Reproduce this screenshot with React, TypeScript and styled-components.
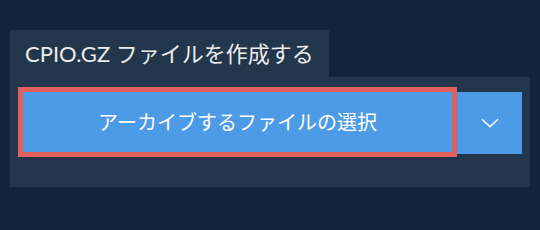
import { createGlobalStyle, styled } from 'styled-components';

const GlobalStyle = createGlobalStyle`
  html, body {
    margin: 0;
    padding: 0;
    background-color: #11243a;
  }

  body {
    font-family: Lato, "Noto Sans CJK JP", sans-serif;
    color: #ececec;
  }
`;

const Page = styled.div`
  width: 540px;
  height: 230px;
  padding: 30px 10px 0 10px;
  box-sizing: border-box;
`;

const Tab = styled.div`
  width: 319px;
  height: 47px;
  box-sizing: border-box;
  background-color: #22364c;
  padding: 0 0 4px 15px;
  display: flex;
  align-items: center;
  font-size: 22px;
  color: #ececec;
  white-space: nowrap;
`;

const Panel = styled.div`
  width: 520px;
  height: 110px;
  box-sizing: border-box;
  background-color: #22364c;
  padding: 10px 8px 0 8px;
`;

const Row = styled.div`
  display: flex;
  align-items: flex-start;
`;

const SelectButton = styled.button`
  width: 439px;
  height: 70px;
  box-sizing: border-box;
  border: 5px solid #de5f5c;
  background-color: #4d9be6;
  color: #ffffff;
  font-family: inherit;
  font-size: 20px;
  display: flex;
  align-items: center;
  justify-content: center;
  padding: 0 0 2px 0;
  cursor: pointer;
`;

const MenuButton = styled.button`
  width: 65px;
  height: 62px;
  margin-top: 5px;
  border: none;
  background-color: #4d9be6;
  display: flex;
  align-items: center;
  justify-content: center;
  padding: 0;
  cursor: pointer;
`;

function Chevron() {
  return (
    <svg width="18" height="10" viewBox="0 0 18 10" fill="none">
      <path d="M1 1.2 L9 8.8 L17 1.2" stroke="#ffffff" strokeWidth="1.4" />
    </svg>
  );
}

export default function App() {
  return (
    <>
      <GlobalStyle />
      <Page>
        <Tab>CPIO.GZ ファイルを作成する</Tab>
        <Panel>
          <Row>
            <SelectButton>アーカイブするファイルの選択</SelectButton>
            <MenuButton aria-label="その他のオプション">
              <Chevron />
            </MenuButton>
          </Row>
        </Panel>
      </Page>
    </>
  );
}
